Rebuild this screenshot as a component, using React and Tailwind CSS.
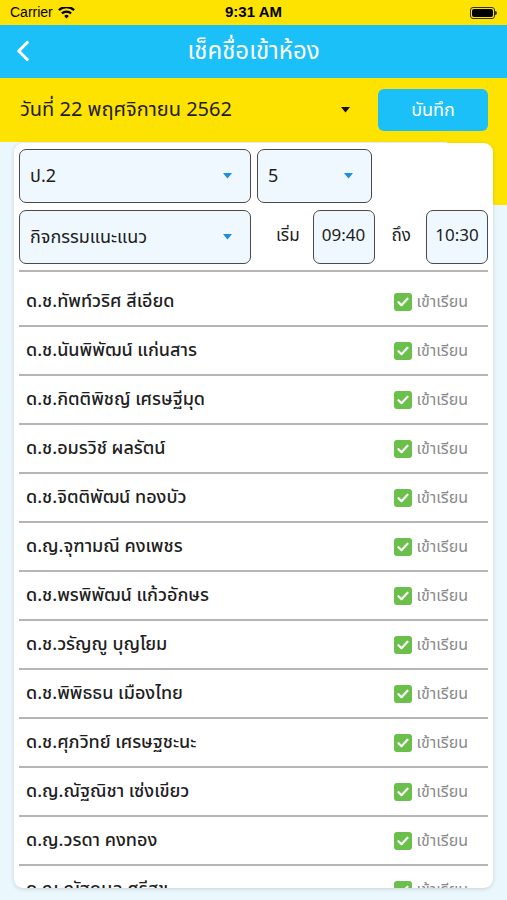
import { ChevronLeft } from 'lucide-react';

const students = [
  'ด.ช.ทัพท์วริศ สีเอียด',
  'ด.ช.นันพิพัฒน์ แก่นสาร',
  'ด.ช.กิตติพิชญ์ เศรษฐีมุด',
  'ด.ช.อมรวิช์ ผลรัตน์',
  'ด.ช.จิตติพัฒน์ ทองบัว',
  'ด.ญ.จุฑามณี คงเพชร',
  'ด.ช.พรพิพัฒน์ แก้วอักษร',
  'ด.ช.วรัญญู บุญโยม',
  'ด.ช.พิพิธธน เมืองไทย',
  'ด.ช.ศุภวิทย์ เศรษฐชะนะ',
  'ด.ญ.ณัฐณิชา เซ่งเขียว',
  'ด.ญ.วรดา คงทอง',
  'ด.ญ.ณัฐกมล ศรีสุข',
];

const Caret = ({ color = '#1a8fe0' }) => (
  <svg width="9" height="6" viewBox="0 0 9 6"><path d="M0 0h9L4.5 5.5z" fill={color} /></svg>
);

const Select = ({ label, className }) => (
  <div className={`h-[54px] flex items-center justify-between pl-[10px] pr-[18px] rounded-[7px] border-[1.5px] border-[#4a4a4a] bg-[#eef8fe] text-[18px] text-[#1c1c1c] ${className}`}>
    <span>{label}</span>
    <Caret />
  </div>
);

const TimeBox = ({ value }) => (
  <div className="h-[54px] w-[62px] flex items-center justify-center rounded-[7px] border-[1.5px] border-[#4a4a4a] bg-[#eef8fe] text-[17px] text-[#1c1c1c]">{value}</div>
);

export default function App() {
  return (
    <div className="w-full h-[900px] overflow-hidden bg-[#eaf7fd]" style={{ fontFamily: '"Noto Sans Thai", "Noto Sans", "DejaVu Sans", sans-serif' }}>
      {/* status bar */}
      <div className="h-[25px] bg-[#ffe300] flex items-center justify-between px-[10px] text-[14px] text-black" style={{ fontFamily: '"Liberation Sans", Arial, sans-serif' }}>
        <div className="flex items-center gap-[5px] w-[120px]">
          <span>Carrier</span>
          <svg width="17" height="12" viewBox="0 0 17 12">
            <path d="M8.5 11.5l2.3-2.6a3.4 3.4 0 0 0-4.6 0z" fill="#000" />
            <path d="M4.6 7.3a5.6 5.6 0 0 1 7.8 0l1.5-1.7a7.9 7.9 0 0 0-10.8 0z" fill="#000" />
            <path d="M1.6 4a10 10 0 0 1 13.8 0l1.5-1.7a12.3 12.3 0 0 0-16.8 0z" fill="#000" />
          </svg>
        </div>
        <span className="font-bold text-[15px]">9:31 AM</span>
        <div className="w-[120px] flex justify-end">
          <div className="flex items-center">
            <div className="w-[25px] h-[12px] rounded-[3px] border border-[#333] p-[1px]">
              <div className="w-full h-full rounded-[2px] bg-black" />
            </div>
            <div className="w-[2px] h-[4px] bg-[#333] rounded-r-sm" />
          </div>
        </div>
      </div>

      {/* nav bar */}
      <div className="relative h-[53px] bg-[#1cc0f9] flex items-center justify-center">
        <ChevronLeft className="absolute left-[6px] top-[9px] text-white" size={34} strokeWidth={2.2} />
        <span className="text-white text-[24px]">เช็คชื่อเข้าห้อง</span>
      </div>

      {/* date row */}
      <div className="h-[64px] bg-[#ffe300] flex items-center pl-[20px] pr-[19px]">
        <span className="text-[20px] text-[#1e1e1e]">วันที่ 22 พฤศจิกายน 2562</span>
        <div className="ml-auto mr-[28px]"><Caret color="#111" /></div>
        <button className="w-[110px] h-[42px] rounded-[6px] bg-[#1cc0f9] text-white text-[18px]">บันทึก</button>
      </div>

      <div className="relative pt-[1px]">
        {/* yellow sweep on the right behind the card */}
        <div className="absolute top-0 right-0 w-[60px] h-[63px] bg-[#ffe300] rounded-bl-[50px]" />

        {/* card */}
        <div className="relative mx-[14px] h-[745px] overflow-hidden rounded-[9px] bg-white shadow-[0_1px_4px_rgba(0,0,0,0.15)] px-[5px] pt-[6px]">
          <div className="flex gap-[6px]">
            <Select label="ป.2" className="w-[232px]" />
            <Select label="5" className="w-[115px]" />
          </div>
          <div className="flex items-center mt-[7px]">
            <Select label="กิจกรรมแนะแนว" className="w-[232px]" />
            <span className="ml-[25px] text-[17px] text-[#1c1c1c]">เริ่ม</span>
            <div className="ml-[13px]"><TimeBox value="09:40" /></div>
            <span className="ml-[17px] text-[17px] text-[#1c1c1c]">ถึง</span>
            <div className="ml-auto"><TimeBox value="10:30" /></div>
          </div>
          <div className="mt-[6px] h-[2px] bg-[#b5b5b5]" />

          <div className="mt-[6px]">
            {students.map((name) => (
              <div key={name} className="h-[49px] flex items-center border-b-2 border-[#b5b5b5] pl-[7px] pr-[20px]">
                <span className="text-[18px] font-medium text-[#1e1e1e]">{name}</span>
                <div className="ml-auto flex items-center gap-[5px]">
                  <div className="w-[18px] h-[18px] rounded-[3px] bg-[#6ac04a] flex items-center justify-center">
                    <svg width="12" height="10" viewBox="0 0 12 10"><path d="M1.5 5.2l3 3 6-6.5" fill="none" stroke="#fff" strokeWidth="2.2" strokeLinecap="round" strokeLinejoin="round" /></svg>
                  </div>
                  <span className="text-[16px] text-[#8a8a8a]">เข้าเรียน</span>
                </div>
              </div>
            ))}
          </div>
        </div>
      </div>
    </div>
  );
}
